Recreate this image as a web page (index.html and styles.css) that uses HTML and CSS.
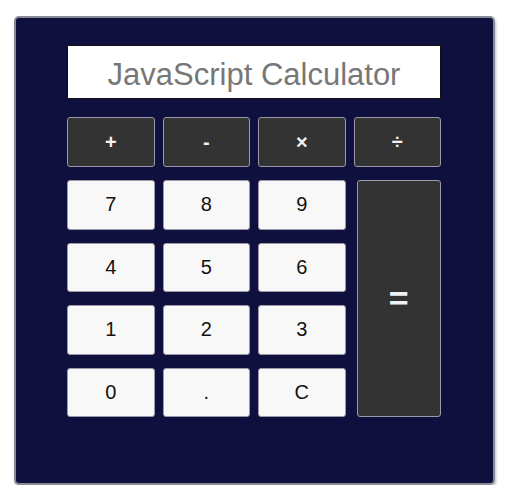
FILE: index.html
```html
<!DOCTYPE html>
<html>
<head>
<meta charset="utf-8">
<link rel="stylesheet" href="styles.css">
</head>
<body>
<div class="calc">
  <div class="display">JavaScript Calculator</div>
  <div class="keys">
    <button class="key op">+</button>
    <button class="key op">-</button>
    <button class="key op">×</button>
    <button class="key op">÷</button>
    <button class="key">7</button>
    <button class="key">8</button>
    <button class="key">9</button>
    <button class="key eq">=</button>
    <button class="key">4</button>
    <button class="key">5</button>
    <button class="key">6</button>
    <button class="key">1</button>
    <button class="key">2</button>
    <button class="key">3</button>
    <button class="key">0</button>
    <button class="key">.</button>
    <button class="key">C</button>
  </div>
</div>
</body>
</html>
```
FILE: styles.css
```css
html, body {
  margin: 0;
  padding: 0;
  background: #ffffff;
}
body {
  padding: 16px 0 0 14px;
  font-family: "Liberation Sans", Arial, sans-serif;
}
.calc {
  box-sizing: border-box;
  width: 481px;
  height: 469px;
  background: #10103f;
  border: 2px solid #8a8a96;
  border-radius: 5px;
  box-shadow: 1px 2px 3px rgba(0,0,0,0.25);
  padding: 27px 51px;
}
.display {
  box-sizing: border-box;
  width: 374px;
  height: 54px;
  padding-top: 6px;
  background: #fff;
  border: 1px solid #111;
  color: #777;
  font-size: 31px;
  display: flex;
  align-items: center;
  justify-content: center;
}
.keys {
  margin-top: 18px;
  display: grid;
  grid-template-columns: repeat(4, 87.5px);
  grid-template-rows: 50px repeat(4, 49.5px);
  column-gap: 8px;
  row-gap: 13px;
}
.key {
  margin: 0;
  padding: 0;
  box-sizing: border-box;
  background: #f8f8f8;
  border: 1px solid #9a9aa8;
  border-radius: 3px;
  font-family: "Liberation Sans", Arial, sans-serif;
  font-size: 20px;
  color: #111;
}
.op {
  background: #333333;
  color: #f2f2f2;
  font-weight: bold;
  font-size: 20px;
}
.eq {
  grid-column: 4;
  grid-row: 2 / span 4;
  margin-left: 3px;
  background: #333333;
  color: #f2f2f2;
  font-weight: bold;
  font-size: 34px;
}
```
